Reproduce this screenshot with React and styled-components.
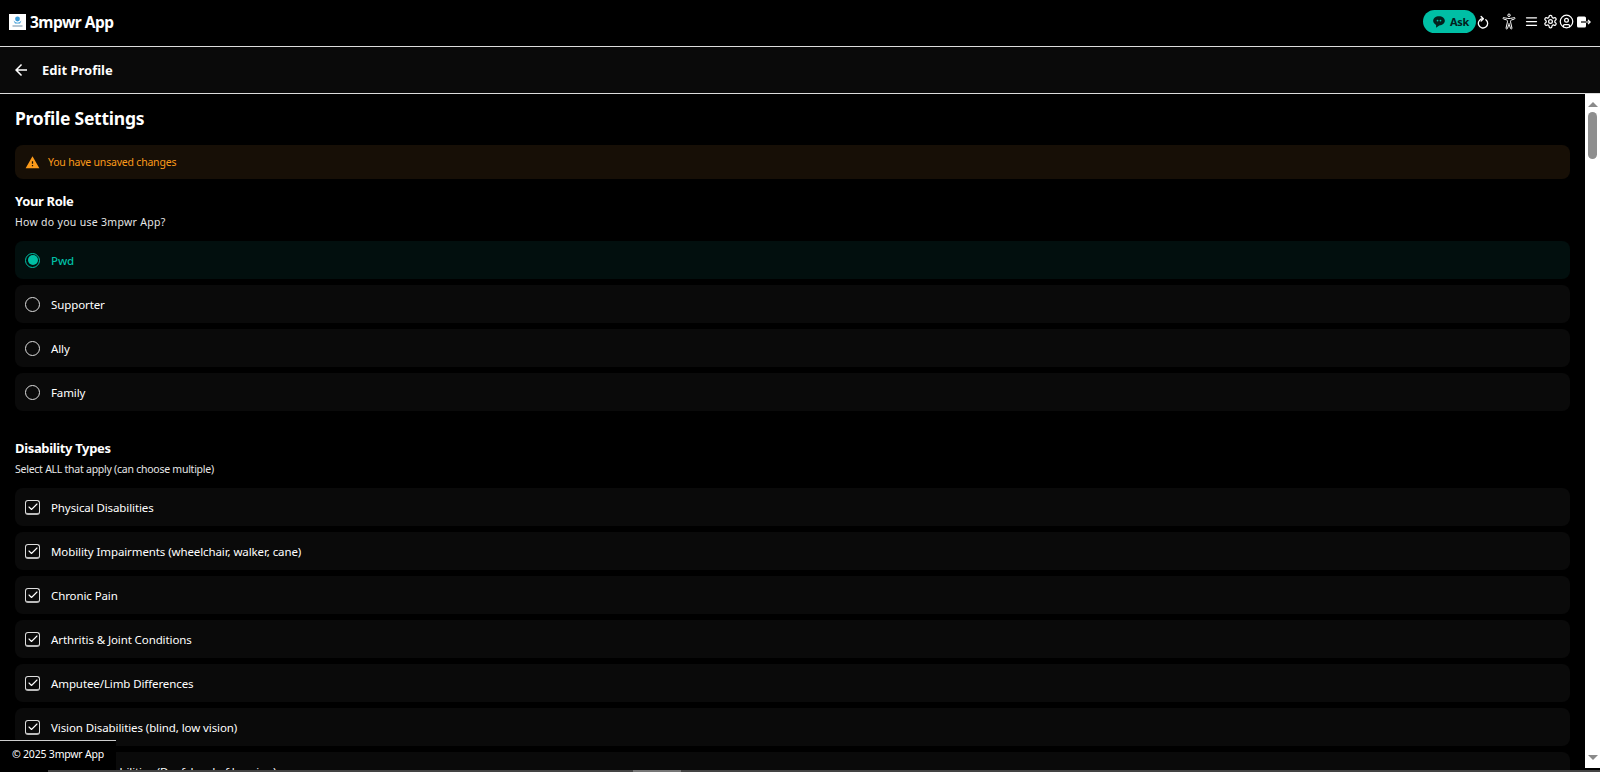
import React from "react";
import styled, { createGlobalStyle } from "styled-components";
import { IoAccessibilityOutline } from "react-icons/io5";
import { MdWarning, MdArrowBack } from "react-icons/md";
import { BiSolidMessageRoundedDots } from "react-icons/bi";
import { LuMenu, LuSettings, LuCircleUser, LuCheck } from "react-icons/lu";

const Global = createGlobalStyle`
  html, body { margin: 0; padding: 0; height: 100%; overflow: hidden; background: #000; }
  body { font-family: "Noto Sans", "Open Sans", sans-serif; color: #fff; }
  * { box-sizing: border-box; }
`;

const Page = styled.div`
  position: relative;
  width: 1600px;
  height: 772px;
  display: flex;
  flex-direction: column;
  overflow: hidden;
  background: #000;
`;
const TopBar = styled.header`
  flex: 0 0 47px;
  display: flex;
  align-items: center;
  padding: 0 9px 3px;
  background: #000;
  border-bottom: 1px solid #ddd;
`;
const Logo = styled.div`
  width: 17px;
  height: 16px;
  background: #fff;
  display: flex;
  align-items: center;
  justify-content: center;
  margin-right: 4px;
`;
const AppName = styled.div`
  font-size: 15.5px;
  font-weight: 700;
  line-height: 20px;
  letter-spacing: -0.5px;
`;
const Spacer = styled.div`
  flex: 1;
`;
const AskPill = styled.div`
  width: 53px;
  height: 23px;
  border-radius: 12px;
  background: #00bfa5;
  color: #03201c;
  display: flex;
  align-items: center;
  padding-left: 9px;
  gap: 4px;
  font-size: 11px;
  font-weight: 700;
  letter-spacing: -0.3px;
`;
const IconSlot = styled.div`
  display: flex;
  align-items: center;
  justify-content: center;
  color: #fff;
  margin-left: ${(p) => p.$ml || 0}px;
  width: ${(p) => p.$w}px;
`;
const SubBar = styled.div`
  flex: 0 0 47px;
  display: flex;
  align-items: center;
  padding: 0 12px;
  background: #0a0a0a;
  border-bottom: 1px solid #ddd;
`;
const SubTitle = styled.div`
  margin-left: 12px;
  font-size: 13px;
  font-weight: 700;
`;
const Body = styled.div`
  flex: 1;
  min-height: 0;
  display: flex;
`;
const Content = styled.main`
  flex: 1;
  min-width: 0;
  overflow: hidden;
  padding: 11px 15px 0;
`;
const Heading = styled.h1`
  margin: 0 0 14px;
  font-size: 17.5px;
  line-height: 26px;
  font-weight: 700;
  letter-spacing: -0.25px;
`;
const Alert = styled.div`
  height: 34px;
  display: flex;
  align-items: center;
  padding-left: 10px;
  gap: 8px;
  background: #170f06;
  border-radius: 8px;
  color: #fb9a1a;
  font-size: 10.5px;
  letter-spacing: -0.2px;
  margin-bottom: 13px;
`;
const SectionTitle = styled.h2`
  margin: 0 0 4px;
  font-size: 13px;
  line-height: 18px;
  font-weight: 700;
  letter-spacing: -0.35px;
`;
const SectionHint = styled.p`
  margin: 0 0 11px;
  font-size: 10.5px;
  line-height: 16px;
  color: #e6e6e6;
  letter-spacing: ${(p) => p.$ls}px;
`;
const List = styled.div`
  display: flex;
  flex-direction: column;
  gap: 6px;
  margin-bottom: ${(p) => p.$mb || 0}px;
`;
const Row = styled.div`
  height: 38px;
  flex-shrink: 0;
  display: flex;
  align-items: center;
  padding-left: 10px;
  gap: 11px;
  border-radius: 8px;
  background: ${(p) => (p.$active ? "#020f0e" : "#0a0a0a")};
  color: ${(p) => (p.$active ? "#00bfa5" : "#fff")};
  font-size: 11.5px;
  font-weight: ${(p) => (p.$active ? 500 : 400)};
  letter-spacing: -0.1px;
`;
const Radio = styled.span`
  width: 15px;
  height: 15px;
  flex-shrink: 0;
  border-radius: 50%;
  border: 1.5px solid ${(p) => (p.$on ? "#00bfa5" : "#ddd")};
  display: flex;
  align-items: center;
  justify-content: center;
  &::after {
    content: "";
    display: ${(p) => (p.$on ? "block" : "none")};
    width: 10px;
    height: 10px;
    border-radius: 50%;
    background: #00bfa5;
  }
`;
const CheckBox = styled.span`
  width: 15px;
  height: 15px;
  flex-shrink: 0;
  display: flex;
  align-items: center;
  justify-content: center;
  color: #fff;
  border: 1.5px solid #ddd;
  border-bottom: 2px solid #bbb;
  border-radius: 3px;
`;
const ScrollTrack = styled.div`
  flex: 0 0 15px;
  background: #fff;
  display: flex;
  flex-direction: column;
  align-items: center;
  margin-bottom: 2px;
`;
const ArrowUp = styled.div`
  margin-top: 8px;
  width: 0;
  height: 0;
  border-left: 5px solid transparent;
  border-right: 5px solid transparent;
  border-bottom: 5px solid #8a8a8a;
`;
const ScrollThumb = styled.div`
  margin-top: 5px;
  width: 9px;
  height: 47px;
  border-radius: 5px;
  background: #8f8f8f;
`;
const ArrowDown = styled.div`
  margin-top: auto;
  margin-bottom: 8px;
  width: 0;
  height: 0;
  border-left: 5px solid transparent;
  border-right: 5px solid transparent;
  border-top: 5px solid #8a8a8a;
`;
const Footer = styled.footer`
  position: absolute;
  left: 0;
  bottom: 2px;
  width: 116px;
  height: 30px;
  background: #000;
  border-top: 1px solid #ccc;
  padding-left: 12px;
  font-size: 10.5px;
  letter-spacing: -0.2px;
  line-height: 27px;
  white-space: nowrap;
`;
const BottomBar = styled.div`
  flex: 0 0 2px;
  display: flex;
  background: #000;
`;
const BarPart = styled.div`
  width: ${(p) => p.$w}px;
  flex: ${(p) => (p.$w ? "none" : 1)};
  background: ${(p) => p.$c};
`;

const roles = ["Pwd", "Supporter", "Ally", "Family"];
const types = [
  "Physical Disabilities",
  "Mobility Impairments (wheelchair, walker, cane)",
  "Chronic Pain",
  "Arthritis & Joint Conditions",
  "Amputee/Limb Differences",
  "Vision Disabilities (blind, low vision)",
  "Hearing Disabilities (Deaf, hard of hearing)",
];

function LogoMark() {
  return (
    <svg width="13" height="12" viewBox="0 0 13 12">
      <circle cx="6.5" cy="3" r="2.4" fill="#3b9bd8" />
      <path d="M2.5 4.5 Q6.5 9 10.5 4.5 L9 7.5 H4 Z" fill="#3b9bd8" />
      <rect x="1.5" y="9.5" width="10" height="1" fill="#6f8ea6" />
    </svg>
  );
}

function RefreshIcon() {
  return (
    <svg width="13" height="14" viewBox="0 0 14 15" fill="none" stroke="#fff" strokeWidth="1.4" strokeLinecap="round" strokeLinejoin="round">
      <path d="M10.6 5 A5 5 0 1 1 7 4" />
      <path d="M5.5 1.5 L8 4 L5.5 6.5" />
    </svg>
  );
}

function ExitIcon() {
  return (
    <svg width="14" height="12" viewBox="0 0 14 12">
      <rect x="0" y="0.5" width="9" height="11" rx="1.5" fill="#fff" />
      <path d="M4 6 H9" stroke="#000" strokeWidth="1.2" fill="none" />
      <path d="M9 6 H13 M11 3.8 L13.2 6 L11 8.2" stroke="#fff" strokeWidth="1.2" fill="none" />
    </svg>
  );
}

export default function App() {
  return (
    <Page>
      <Global />
      <TopBar>
        <Logo><LogoMark /></Logo>
        <AppName>3mpwr App</AppName>
        <Spacer />
        <AskPill><BiSolidMessageRoundedDots size={14} />Ask</AskPill>
        <IconSlot $w={13} $ml={0}><RefreshIcon /></IconSlot>
        <IconSlot $w={16} $ml={12}><IoAccessibilityOutline size={17} /></IconSlot>
        <IconSlot $w={15} $ml={7}><LuMenu size={19} /></IconSlot>
        <IconSlot $w={15} $ml={4}><LuSettings size={15} /></IconSlot>
        <IconSlot $w={15} $ml={1}><LuCircleUser size={15} /></IconSlot>
        <IconSlot $w={15} $ml={2}><ExitIcon /></IconSlot>
      </TopBar>
      <SubBar>
        <MdArrowBack size={18} />
        <SubTitle>Edit Profile</SubTitle>
      </SubBar>
      <Body>
        <Content>
          <Heading>Profile Settings</Heading>
          <Alert><MdWarning size={15} />You have unsaved changes</Alert>
          <SectionTitle>Your Role</SectionTitle>
          <SectionHint $ls={0.3}>How do you use 3mpwr App?</SectionHint>
          <List $mb={28}>
            {roles.map((r, i) => (
              <Row key={r} $active={i === 0}>
                <Radio $on={i === 0} />
                {r}
              </Row>
            ))}
          </List>
          <SectionTitle>Disability Types</SectionTitle>
          <SectionHint $ls={-0.25}>Select ALL that apply (can choose multiple)</SectionHint>
          <List>
            {types.map((t) => (
              <Row key={t}>
                <CheckBox><LuCheck size={12} strokeWidth={2.2} /></CheckBox>
                {t}
              </Row>
            ))}
          </List>
        </Content>
        <ScrollTrack>
          <ArrowUp />
          <ScrollThumb />
          <ArrowDown />
        </ScrollTrack>
      </Body>
      <BottomBar>
        <BarPart $w={48} $c="#000" />
        <BarPart $w={585} $c="#444" />
        <BarPart $w={48} $c="#777" />
        <BarPart $c="#444" />
      </BottomBar>
      <Footer>© 2025 3mpwr App</Footer>
    </Page>
  );
}
